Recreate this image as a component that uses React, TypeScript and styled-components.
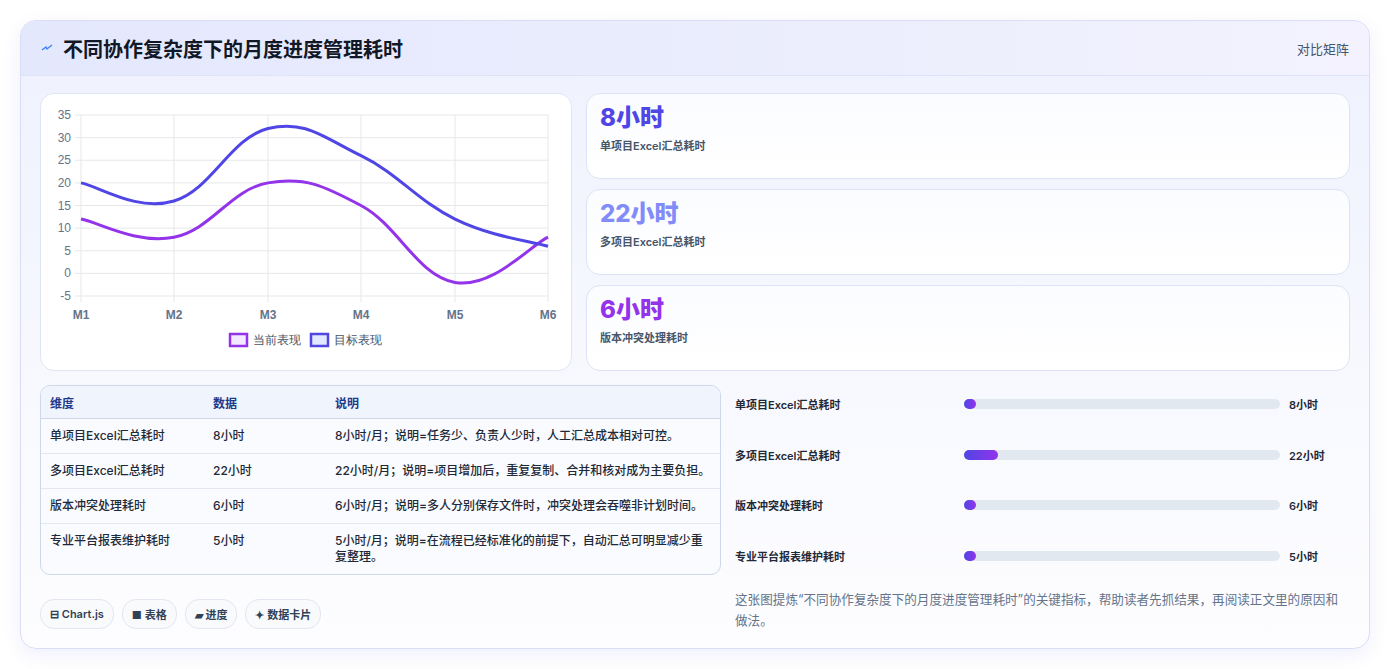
import React from 'react';
import styled, { createGlobalStyle } from 'styled-components';

const GlobalStyle = createGlobalStyle`
  body {
    margin: 0;
    background: #ffffff;
    font-family: Inter, "Noto Sans CJK SC", "Noto Sans", sans-serif;
  }
`;

const Page = styled.div`
  padding: 20px 20px 20px 20px;
  height: 669px;
  box-sizing: border-box;
`;

const Card = styled.div`
  height: 629px;
  box-sizing: border-box;
  border: 1px solid #d9ddf5;
  border-radius: 16px;
  overflow: hidden;
  background: linear-gradient(180deg, #eef1fe 0%, #f8f9fe 60%, #fdfdff 100%);
  box-shadow: 0 6px 18px rgba(99, 102, 241, 0.1);
`;

const Header = styled.div`
  height: 54px;
  display: flex;
  align-items: center;
  justify-content: space-between;
  padding: 0 20px 0 20px;
  background: linear-gradient(90deg, #e4e8fd 0%, #eceefd 60%, #f3f2fe 100%);
  border-bottom: 1px solid #dfe3f7;
`;

const Title = styled.h1`
  margin: 0;
  display: flex;
  align-items: center;
  gap: 10px;
  font-size: 20px;
  font-weight: 700;
  color: #111827;
`;

const Tag = styled.span`
  font-size: 13px;
  color: #475569;
`;

const Body = styled.div`
  padding: 17px 19px 0 19px;
  display: grid;
  grid-template-columns: 532px 1fr;
  column-gap: 14px;
`;

const Panel = styled.div`
  height: 278px;
  box-sizing: border-box;
  background: #ffffff;
  border: 1px solid #e0e5f3;
  border-radius: 14px;
  overflow: hidden;
`;

const Stats = styled.div`
  display: flex;
  flex-direction: column;
  gap: 10px;
`;

const Stat = styled.div`
  height: 86px;
  box-sizing: border-box;
  padding: 9px 13px;
  background: linear-gradient(180deg, #fbfcff, #ffffff);
  border: 1px solid #dde3f5;
  border-radius: 14px;
`;

const StatValue = styled.div<{ $color: string }>`
  font-size: 24px;
  font-weight: 800;
  color: ${(p) => p.$color};
  line-height: 30px;
`;

const StatLabel = styled.div`
  margin-top: 4px;
  font-size: 11px;
  font-weight: 600;
  color: #475569;
`;

const Bottom = styled.div`
  grid-column: 1 / -1;
  margin-top: 14px;
  display: grid;
  grid-template-columns: 681px 1fr;
  column-gap: 14px;
`;

const Table = styled.table`
  width: 100%;
  border-collapse: separate;
  border-spacing: 0;
  border: 1px solid #cfd8ea;
  border-radius: 10px;
  overflow: hidden;
  font-size: 12px;
  background: #f9fbfe;
  th {
    text-align: left;
    font-weight: 600;
    color: #1e3a8a;
    background: #eff4fd;
    height: 32px;
    padding: 0 9px;
    border-bottom: 1px solid #cfd8ea;
  }
  td {
    color: #1f2937;
    font-weight: 500;
    padding: 9px 9px 9px;
    vertical-align: top;
    line-height: 16px;
    border-bottom: 1px solid #e3e8f0;
  }
  tr:last-child td {
    border-bottom: none;
  }
`;

const Chips = styled.div`
  display: flex;
  gap: 8px;
  margin-top: 24px;
`;

const Chip = styled.span`
  height: 28px;
  display: inline-flex;
  align-items: center;
  padding: 0 9px;
  border: 1px solid #e2e6ef;
  border-radius: 14px;
  background: #f8fafc;
  font-size: 11px;
  font-weight: 600;
  color: #334155;
`;

const Bars = styled.div`
  display: flex;
  flex-direction: column;
`;

const BarRow = styled.div`
  height: 50.5px;
  display: grid;
  grid-template-columns: 220px 316px 1fr;
  column-gap: 9px;
  align-items: center;
  font-size: 11px;
  font-weight: 600;
  color: #1f2937;
  &:first-child {
    margin-top: -6px;
  }
`;

const Track = styled.div`
  height: 10px;
  border-radius: 5px;
  background: #e2e8f0;
`;

const Fill = styled.div`
  height: 100%;
  border-radius: 5px;
  background: linear-gradient(90deg, #4f46e5, #9333ea);
`;

const Note = styled.p`
  margin: 8px 0 0 0;
  font-size: 12.6px;
  line-height: 21px;
  color: #64748b;
  padding-right: 6px;
`;

const xs = [40, 133, 227, 320, 414, 507];
const yOf = (v: number) => 21 + ((35 - v) / 40) * 181;

function smooth(vals: number[]) {
  const pts = vals.map((v, i) => [xs[i], yOf(v)]);
  let d = `M${pts[0][0]},${pts[0][1]}`;
  const t = 0.4;
  for (let i = 0; i < pts.length - 1; i++) {
    const p0 = pts[i - 1] || pts[i];
    const p1 = pts[i];
    const p2 = pts[i + 1];
    const p3 = pts[i + 2] || p2;
    const c1 = [p1[0] + ((p2[0] - p0[0]) * t) / 2, p1[1] + ((p2[1] - p0[1]) * t) / 2];
    const c2 = [p2[0] - ((p3[0] - p1[0]) * t) / 2, p2[1] - ((p3[1] - p1[1]) * t) / 2];
    d += ` C${c1[0]},${c1[1]} ${c2[0]},${c2[1]} ${p2[0]},${p2[1]}`;
  }
  return d;
}

function Chart() {
  const ticks = [35, 30, 25, 20, 15, 10, 5, 0, -5];
  return (
    <svg width="531" height="276" viewBox="0 0 531 276" fontFamily="Liberation Sans, sans-serif">
      {ticks.map((t) => (
        <g key={t}>
          <line x1={34} x2={507} y1={yOf(t)} y2={yOf(t)} stroke="#e5e7eb" />
          <text x={30} y={yOf(t) + 4} fontSize="12" fill="#64748b" textAnchor="end">
            {t}
          </text>
        </g>
      ))}
      {xs.map((x, i) => (
        <g key={x}>
          <line x1={x} x2={x} y1={21} y2={208} stroke="#e5e7eb" />
          <text x={x} y={225} fontSize="12" fontWeight="700" fill="#64748b" textAnchor="middle">
            M{i + 1}
          </text>
        </g>
      ))}
      <path d={smooth([12, 8, 20, 15, -2, 8])} fill="none" stroke="#9333ea" strokeWidth="3" />
      <path d={smooth([20, 16, 32, 26, 12, 6])} fill="none" stroke="#4f46e5" strokeWidth="3" />
      <rect x={189} y={240} width={17} height={12} fill="#f3e8ff" stroke="#9333ea" strokeWidth="2.5" />
      <text x={212} y={250} fontSize="12" fill="#475569">当前表现</text>
      <rect x={270} y={240} width={17} height={12} fill="#e0e7ff" stroke="#4f46e5" strokeWidth="2.5" />
      <text x={293} y={250} fontSize="12" fill="#475569">目标表现</text>
    </svg>
  );
}

const rows = [
  ['单项目Excel汇总耗时', '8小时', '8小时/月；说明=任务少、负责人少时，人工汇总成本相对可控。', 12],
  ['多项目Excel汇总耗时', '22小时', '22小时/月；说明=项目增加后，重复复制、合并和核对成为主要负担。', 34],
  ['版本冲突处理耗时', '6小时', '6小时/月；说明=多人分别保存文件时，冲突处理会吞噬非计划时间。', 12],
  ['专业平台报表维护耗时', '5小时', '5小时/月；说明=在流程已经标准化的前提下，自动汇总可明显减少重复整理。', 12],
] as const;

export default function App() {
  return (
    <>
      <GlobalStyle />
      <Page>
        <Card>
          <Header>
            <Title>
              <svg width="12" height="12" viewBox="0 0 12 12">
                <path d="M1 8 L5 5 L6 7 L11 3" fill="none" stroke="#3b82f6" strokeWidth="1.4" />
              </svg>
              不同协作复杂度下的月度进度管理耗时
            </Title>
            <Tag>对比矩阵</Tag>
          </Header>
          <Body>
            <Panel>
              <Chart />
            </Panel>
            <Stats>
              <Stat>
                <StatValue $color="#4f46e5">8小时</StatValue>
                <StatLabel>单项目Excel汇总耗时</StatLabel>
              </Stat>
              <Stat>
                <StatValue $color="#818cf8">22小时</StatValue>
                <StatLabel>多项目Excel汇总耗时</StatLabel>
              </Stat>
              <Stat>
                <StatValue $color="#9333ea">6小时</StatValue>
                <StatLabel>版本冲突处理耗时</StatLabel>
              </Stat>
            </Stats>
            <Bottom>
              <div>
                <Table>
                  <colgroup>
                    <col style={{ width: 163 }} />
                    <col style={{ width: 122 }} />
                    <col />
                  </colgroup>
                  <thead>
                    <tr>
                      <th>维度</th>
                      <th>数据</th>
                      <th>说明</th>
                    </tr>
                  </thead>
                  <tbody>
                    {rows.map((r) => (
                      <tr key={r[0]}>
                        <td>{r[0]}</td>
                        <td>{r[1]}</td>
                        <td>{r[2]}</td>
                      </tr>
                    ))}
                  </tbody>
                </Table>
                <Chips>
                  <Chip>⊟ Chart.js</Chip>
                  <Chip>■ 表格</Chip>
                  <Chip>▰ 进度</Chip>
                  <Chip>✦ 数据卡片</Chip>
                </Chips>
              </div>
              <div>
                <Bars>
                  {rows.map((r) => (
                    <BarRow key={r[0]}>
                      <span>{r[0]}</span>
                      <Track>
                        <Fill style={{ width: r[3] }} />
                      </Track>
                      <span>{r[1]}</span>
                    </BarRow>
                  ))}
                </Bars>
                <Note>这张图提炼“不同协作复杂度下的月度进度管理耗时”的关键指标，帮助读者先抓结果，再阅读正文里的原因和做法。</Note>
              </div>
            </Bottom>
          </Body>
        </Card>
      </Page>
    </>
  );
}
